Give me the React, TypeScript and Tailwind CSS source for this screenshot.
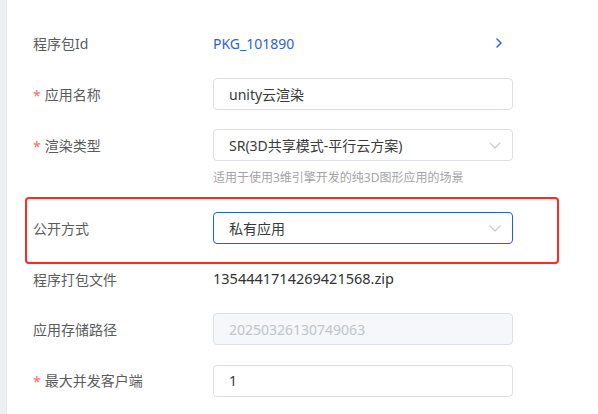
import React from "react";

const font = { fontFamily: '"Noto Sans", "Noto Sans CJK SC", sans-serif' };

function Label({ text, required }: { text: string; required?: boolean }) {
  return (
    <div className="w-[180px] shrink-0 flex items-center text-[14px] text-[#5c5c5c]">
      {required && <span className="text-[#f56c6c] mr-[4px] mt-[2px]">*</span>}
      <span>{text}</span>
    </div>
  );
}

function ChevronDown() {
  return (
    <svg width="12" height="7" viewBox="0 0 12 7" fill="none" className="shrink-0">
      <path d="M1 1l5 5 5-5" stroke="#c6cad2" strokeWidth="1.2" strokeLinecap="round" strokeLinejoin="round" />
    </svg>
  );
}

function Field({
  children,
  active,
  disabled,
  select,
}: {
  children: React.ReactNode;
  active?: boolean;
  disabled?: boolean;
  select?: boolean;
}) {
  return (
    <div
      className={
        "w-[300px] h-[32px] rounded-[4px] border flex items-center pl-[15px] pr-[11px] text-[14px] " +
        (active ? "border-[#2260d8] " : "border-[#dcdfe6] ") +
        (disabled ? "bg-[#f5f7fa] text-[#c0c4cc]" : "bg-white text-[#3a3a3a]")
      }
    >
      <span className="flex-1 truncate">{children}</span>
      {select && <ChevronDown />}
    </div>
  );
}

export default function App() {
  return (
    <div className="w-[598px] h-[414px] bg-white flex overflow-hidden" style={font}>
      <div className="w-[7px] shrink-0 bg-[#eff0f2] border-r border-[#e6e7ea]" />
      <div className="flex-1 pl-[26px] pt-[27px]">
        {/* Row 1 */}
        <div className="flex items-center h-[32px] mb-[19px]">
          <Label text="程序包Id" />
          <span className="text-[14px] text-[#2b62d9]">PKG_101890</span>
          <svg width="6" height="10" viewBox="0 0 6 10" fill="none" className="ml-[202px]">
            <path d="M1 1l4 4-4 4" stroke="#2a6df0" strokeWidth="1.6" strokeLinecap="round" strokeLinejoin="round" />
          </svg>
        </div>
        {/* Row 2 */}
        <div className="flex items-center h-[32px] mb-[19px]">
          <Label text="应用名称" required />
          <Field>unity云渲染</Field>
        </div>
        {/* Row 3 */}
        <div className="flex items-center h-[32px]">
          <Label text="渲染类型" required />
          <Field select>SR(3D共享模式-平行云方案)</Field>
        </div>
        <div className="pl-[180px] mt-[7px] mb-[24px] h-[20px] leading-[20px] text-[12px] text-[#a3a3a3]">
          适用于使用3维引擎开发的纯3D图形应用的场景
        </div>
        {/* Row 4 */}
        <div className="relative flex items-center h-[32px] mb-[19px]">
          <div className="absolute left-[-8px] top-[-15px] w-[534px] h-[67px] border-2 border-[#ff2b22] rounded-[4px] pointer-events-none" />
          <Label text="公开方式" />
          <Field active select>
            私有应用
          </Field>
        </div>
        {/* Row 5 */}
        <div className="flex items-center h-[32px] mb-[18px]">
          <Label text="程序打包文件" />
          <span className="text-[14.5px] text-[#333]">1354441714269421568.zip</span>
        </div>
        {/* Row 6 */}
        <div className="flex items-center h-[32px] mb-[19px]">
          <Label text="应用存储路径" />
          <Field disabled>20250326130749063</Field>
        </div>
        {/* Row 7 */}
        <div className="flex items-center h-[33px]">
          <Label text="最大并发客户端" required />
          <Field>1</Field>
        </div>
      </div>
    </div>
  );
}
